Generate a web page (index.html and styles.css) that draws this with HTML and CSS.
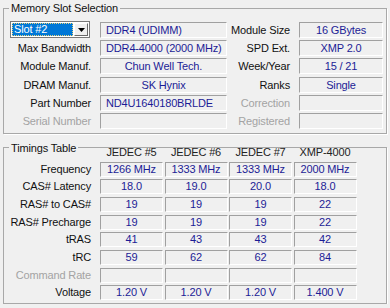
FILE: index.html
```html
<!DOCTYPE html>
<html lang="en">
<head>
    <meta charset="UTF-8">
    <meta name="viewport" content="width=device-width, initial-scale=1.0">
    <title>SPD</title>
    <link rel="stylesheet" href="styles.css">
</head>
<body>
    <fieldset class="group slot-group">
        <legend>Memory Slot Selection</legend>
        <div class="slot-grid">
            <div class="select">
                <span class="select-value">Slot #2</span>
                <span class="select-btn">
                    <svg width="7" height="4" viewBox="0 0 7 4"><polygon points="0,0 7,0 3.5,4" fill="#000"/></svg>
                </span>
            </div>
            <div class="field left">DDR4 (UDIMM)</div>
            <div class="label">Module Size</div>
            <div class="field">16 GBytes</div>

            <div class="label">Max Bandwidth</div>
            <div class="field left">DDR4-4000 (2000 MHz)</div>
            <div class="label">SPD Ext.</div>
            <div class="field">XMP 2.0</div>

            <div class="label">Module Manuf.</div>
            <div class="field">Chun Well Tech.</div>
            <div class="label">Week/Year</div>
            <div class="field">15 / 21</div>

            <div class="label">DRAM Manuf.</div>
            <div class="field">SK Hynix</div>
            <div class="label">Ranks</div>
            <div class="field">Single</div>

            <div class="label">Part Number</div>
            <div class="field left">ND4U1640180BRLDE</div>
            <div class="label dim">Correction</div>
            <div class="field"></div>

            <div class="label dim">Serial Number</div>
            <div class="field"></div>
            <div class="label dim">Registered</div>
            <div class="field"></div>
        </div>
    </fieldset>

    <fieldset class="group timings-group">
        <legend>Timings Table</legend>
        <div class="timings-grid">
            <div></div>
            <div class="col-head">JEDEC #5</div>
            <div class="col-head">JEDEC #6</div>
            <div class="col-head">JEDEC #7</div>
            <div class="col-head">XMP-4000</div>

            <div class="label">Frequency</div>
            <div class="field">1266 MHz</div>
            <div class="field">1333 MHz</div>
            <div class="field">1333 MHz</div>
            <div class="field">2000 MHz</div>

            <div class="label">CAS# Latency</div>
            <div class="field">18.0</div>
            <div class="field">19.0</div>
            <div class="field">20.0</div>
            <div class="field">18.0</div>

            <div class="label">RAS# to CAS#</div>
            <div class="field">19</div>
            <div class="field">19</div>
            <div class="field">19</div>
            <div class="field">22</div>

            <div class="label">RAS# Precharge</div>
            <div class="field">19</div>
            <div class="field">19</div>
            <div class="field">19</div>
            <div class="field">22</div>

            <div class="label">tRAS</div>
            <div class="field">41</div>
            <div class="field">43</div>
            <div class="field">43</div>
            <div class="field">42</div>

            <div class="label">tRC</div>
            <div class="field">59</div>
            <div class="field">62</div>
            <div class="field">62</div>
            <div class="field">84</div>

            <div class="label dim">Command Rate</div>
            <div class="field"></div>
            <div class="field"></div>
            <div class="field"></div>
            <div class="field"></div>

            <div class="label">Voltage</div>
            <div class="field">1.20 V</div>
            <div class="field">1.20 V</div>
            <div class="field">1.20 V</div>
            <div class="field">1.400 V</div>
        </div>
    </fieldset>
</body>
</html>
```

FILE: styles.css
```css
body {
    margin: 0;
    background-color: #f0f0f0;
    font-family: "Liberation Sans", Arial, sans-serif;
    font-size: 11px;
    letter-spacing: -0.15px;
    color: #111;
}

.group {
    box-sizing: border-box;
    width: 384px;
    margin: 1px 0 0 3px;
    padding: 7px 3px 4px 4px;
    border: 1px solid #a8a8a8;
    box-shadow: 1px 1px 0 #fff;
}

.group legend {
    margin-left: 1px;
    padding: 0 2px;
    line-height: 14px;
    color: #111;
}

.timings-group {
    margin-top: 7px;
    padding-top: 0;
    padding-bottom: 3px;
}

/* slot selection block */
.slot-grid {
    display: grid;
    grid-template-columns: 92px 127px 72px 84px;
    grid-auto-rows: 16px;
    row-gap: 2.2px;
}

.label {
    text-align: right;
    padding-right: 9px;
    line-height: 16px;
    white-space: nowrap;
}

.label.dim {
    color: #a3a3a3;
}

.field {
    box-sizing: border-box;
    border: 1px solid;
    border-color: #a0a0a0 #fff #fff #a0a0a0;
    color: #1c1c96;
    text-align: center;
    line-height: 14px;
    white-space: nowrap;
    overflow: hidden;
}

.field.left {
    text-align: left;
    padding-left: 5px;
}

.select {
    box-sizing: border-box;
    display: flex;
    width: 80px;
    height: 17px;
    margin: -1px 0 0 2px;
    padding: 1px;
    background-color: #fff;
    border: 1px solid #7a7a7a;
}

.select-value {
    flex: 1;
    background-color: #0078d7;
    color: #fff;
    padding-left: 2px;
    line-height: 13px;
    outline: 1px dotted #e8d27a;
    outline-offset: -1px;
}

.select-btn {
    box-sizing: border-box;
    width: 14px;
    margin-left: 1px;
    display: flex;
    align-items: center;
    justify-content: center;
    background-color: #f0f0f0;
    border: 1px solid;
    border-color: #fff #6a6a6a #6a6a6a #fff;
}

/* timings block */
.timings-grid {
    display: grid;
    grid-template-columns: 90.5px repeat(4, 63px);
    grid-template-rows: 13px;
    grid-auto-rows: 15px;
    column-gap: 1.5px;
    row-gap: 2.7px;
    margin-top: -9px;
}

.timings-grid .label {
    padding-right: 7.5px;
    line-height: 15px;
}

.timings-grid .field {
    line-height: 13px;
}

.col-head {
    text-align: center;
    line-height: 13px;
    color: #222;
}
```
